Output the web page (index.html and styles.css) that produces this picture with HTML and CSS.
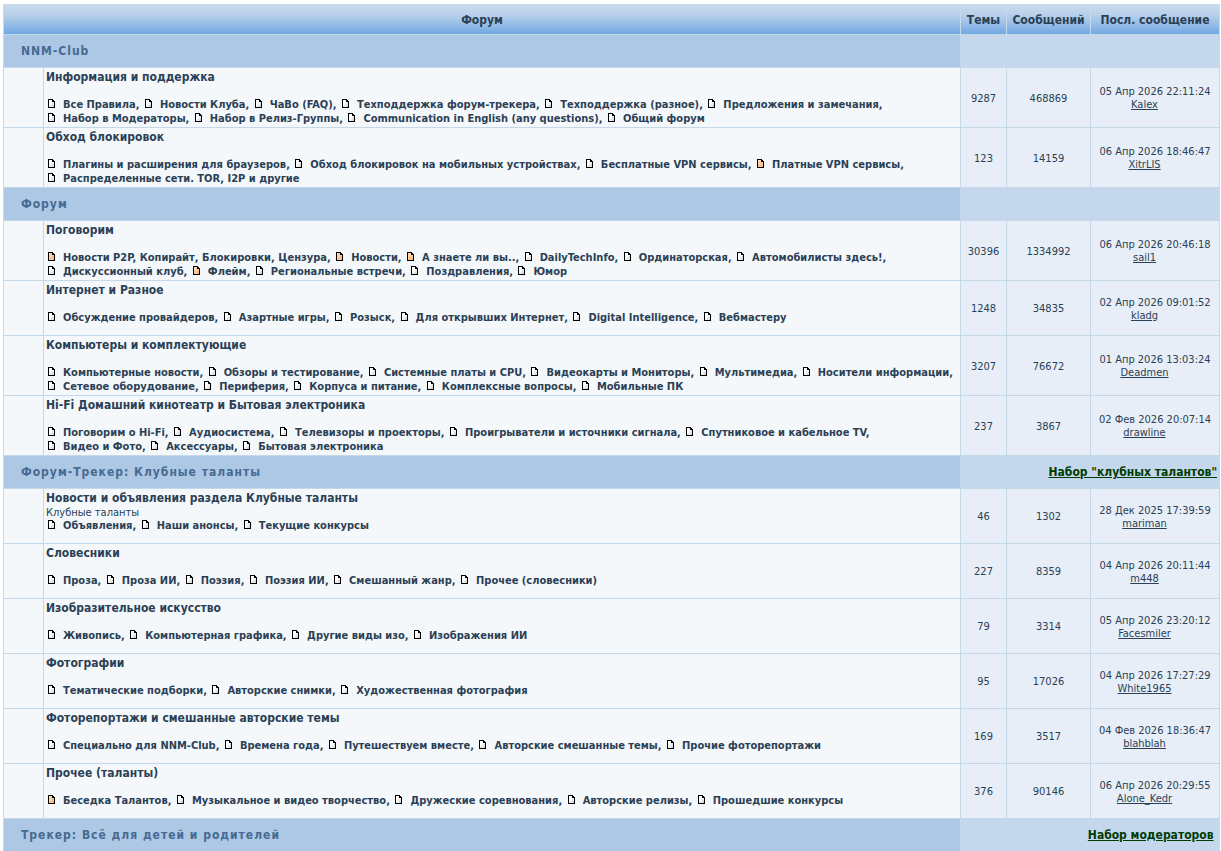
FILE: index.html
```html
<!DOCTYPE html>
<html lang="ru">

<head>
    <meta charset="utf-8">
    <title>NNM-Club</title>
    <link rel="stylesheet" href="styles.css">
</head>

<body>

    <!-- иконки подфорумов -->
    <svg class="sprite" aria-hidden="true">
        <defs>
            <linearGradient id="paper" x1="0" y1="0" x2="1" y2="1">
                <stop offset="0.4" stop-color="#fff" />
                <stop offset="1" stop-color="#ccc" />
            </linearGradient>
            <linearGradient id="paperNew" x1="0" y1="0" x2="1" y2="1">
                <stop offset="0.2" stop-color="#ffd9b0" />
                <stop offset="1" stop-color="#f5b27a" />
            </linearGradient>
            <symbol id="doc" viewBox="0 0 12 9">
                <path d="M3 1H6V3H8V8H3Z" fill="url(#paper)" />
                <path d="M2 0H7V1H8V2H9V9H2ZM3 1V8H8V3H6V1Z" fill="#000" fill-rule="evenodd" />
            </symbol>
            <symbol id="doc-new" viewBox="0 0 12 9">
                <path d="M3 1H6V3H8V8H3Z" fill="url(#paperNew)" />
                <path d="M2 0H7V1H8V2H9V9H2ZM3 1V8H8V3H6V1Z" fill="#000" fill-rule="evenodd" />
            </symbol>
        </defs>
    </svg>

    <table class="forumline">
        <colgroup>
            <col class="col-icon">
            <col>
            <col class="col-topics">
            <col class="col-posts">
            <col class="col-last">
        </colgroup>
        <thead>
            <tr>
                <th colspan="2">Форум</th>
                <th>Темы</th>
                <th>Сообщений</th>
                <th>Посл. сообщение</th>
            </tr>
        </thead>
        <tbody>
            <tr class="cat">
                <td colspan="2" class="cat-left"><a href="#">NNM-Club</a></td>
                <td colspan="3" class="cat-right"></td>
            </tr>
            <tr>
                <td class="row1"></td>
                <td class="row1 forum">
                    <a class="forumlink" href="#">Информация и поддержка</a>
                    <p class="desc"></p>
                    <div class="subs">
                        <span><svg class="ico"><use href="#doc" /></svg><a href="#">Все Правила</a>,</span>
                        <span><svg class="ico"><use href="#doc" /></svg><a href="#">Новости Клуба</a>,</span>
                        <span><svg class="ico"><use href="#doc" /></svg><a href="#">ЧаВо (FAQ)</a>,</span>
                        <span><svg class="ico"><use href="#doc" /></svg><a href="#">Техподдержка форум-трекера</a>,</span>
                        <span><svg class="ico"><use href="#doc" /></svg><a href="#">Техподдержка (разное)</a>,</span>
                        <span><svg class="ico"><use href="#doc" /></svg><a href="#">Предложения и замечания</a>,</span>
                        <span><svg class="ico"><use href="#doc" /></svg><a href="#">Набор в Модераторы</a>,</span>
                        <span><svg class="ico"><use href="#doc" /></svg><a href="#">Набор в Релиз-Группы</a>,</span>
                        <span><svg class="ico"><use href="#doc" /></svg><a href="#">Communication in English (any questions)</a>,</span>
                        <span><svg class="ico"><use href="#doc" /></svg><a href="#">Общий форум</a></span>
                    </div>
                </td>
                <td class="row2">9287</td>
                <td class="row2">468869</td>
                <td class="row2">05 Апр 2026 22:11:24<div class="author"><a href="#">Kalex</a></div></td>
            </tr>
            <tr>
                <td class="row1"></td>
                <td class="row1 forum">
                    <a class="forumlink" href="#">Обход блокировок</a>
                    <p class="desc"></p>
                    <div class="subs">
                        <span><svg class="ico"><use href="#doc" /></svg><a href="#">Плагины и расширения для браузеров</a>,</span>
                        <span><svg class="ico"><use href="#doc" /></svg><a href="#">Обход блокировок на мобильных устройствах</a>,</span>
                        <span><svg class="ico"><use href="#doc" /></svg><a href="#">Бесплатные VPN сервисы</a>,</span>
                        <span><svg class="ico"><use href="#doc-new" /></svg><a href="#">Платные VPN сервисы</a>,</span>
                        <span><svg class="ico"><use href="#doc" /></svg><a href="#">Распределенные сети. TOR, I2P и другие</a></span>
                    </div>
                </td>
                <td class="row2">123</td>
                <td class="row2">14159</td>
                <td class="row2">06 Апр 2026 18:46:47<div class="author"><a href="#">XitrLIS</a></div></td>
            </tr>

            <tr class="cat">
                <td colspan="2" class="cat-left"><a href="#">Форум</a></td>
                <td colspan="3" class="cat-right"></td>
            </tr>
            <tr>
                <td class="row1"></td>
                <td class="row1 forum">
                    <a class="forumlink" href="#">Поговорим</a>
                    <p class="desc"></p>
                    <div class="subs">
                        <span><svg class="ico"><use href="#doc-new" /></svg><a href="#">Новости P2P, Копирайт, Блокировки, Цензура</a>,</span>
                        <span><svg class="ico"><use href="#doc-new" /></svg><a href="#">Новости</a>,</span>
                        <span><svg class="ico"><use href="#doc-new" /></svg><a href="#">А знаете ли вы..</a>,</span>
                        <span><svg class="ico"><use href="#doc" /></svg><a href="#">DailyTechInfo</a>,</span>
                        <span><svg class="ico"><use href="#doc" /></svg><a href="#">Ординаторская</a>,</span>
                        <span><svg class="ico"><use href="#doc" /></svg><a href="#">Автомобилисты здесь!</a>,</span>
                        <span><svg class="ico"><use href="#doc" /></svg><a href="#">Дискуссионный клуб</a>,</span>
                        <span><svg class="ico"><use href="#doc-new" /></svg><a href="#">Флейм</a>,</span>
                        <span><svg class="ico"><use href="#doc" /></svg><a href="#">Региональные встречи</a>,</span>
                        <span><svg class="ico"><use href="#doc" /></svg><a href="#">Поздравления</a>,</span>
                        <span><svg class="ico"><use href="#doc" /></svg><a href="#">Юмор</a></span>
                    </div>
                </td>
                <td class="row2">30396</td>
                <td class="row2">1334992</td>
                <td class="row2">06 Апр 2026 20:46:18<div class="author"><a href="#">sail1</a></div></td>
            </tr>
            <tr>
                <td class="row1"></td>
                <td class="row1 forum">
                    <a class="forumlink" href="#">Интернет и Разное</a>
                    <p class="desc"></p>
                    <div class="subs">
                        <span><svg class="ico"><use href="#doc" /></svg><a href="#">Обсуждение провайдеров</a>,</span>
                        <span><svg class="ico"><use href="#doc" /></svg><a href="#">Азартные игры</a>,</span>
                        <span><svg class="ico"><use href="#doc" /></svg><a href="#">Розыск</a>,</span>
                        <span><svg class="ico"><use href="#doc" /></svg><a href="#">Для открывших Интернет</a>,</span>
                        <span><svg class="ico"><use href="#doc" /></svg><a href="#">Digital Intelligence</a>,</span>
                        <span><svg class="ico"><use href="#doc" /></svg><a href="#">Вебмастеру</a></span>
                    </div>
                </td>
                <td class="row2">1248</td>
                <td class="row2">34835</td>
                <td class="row2">02 Апр 2026 09:01:52<div class="author"><a href="#">kladg</a></div></td>
            </tr>
            <tr>
                <td class="row1"></td>
                <td class="row1 forum">
                    <a class="forumlink" href="#">Компьютеры и комплектующие</a>
                    <p class="desc"></p>
                    <div class="subs">
                        <span><svg class="ico"><use href="#doc" /></svg><a href="#">Компьютерные новости</a>,</span>
                        <span><svg class="ico"><use href="#doc" /></svg><a href="#">Обзоры и тестирование</a>,</span>
                        <span><svg class="ico"><use href="#doc" /></svg><a href="#">Системные платы и CPU</a>,</span>
                        <span><svg class="ico"><use href="#doc" /></svg><a href="#">Видеокарты и Мониторы</a>,</span>
                        <span><svg class="ico"><use href="#doc" /></svg><a href="#">Мультимедиа</a>,</span>
                        <span><svg class="ico"><use href="#doc" /></svg><a href="#">Носители информации</a>,</span>
                        <span><svg class="ico"><use href="#doc" /></svg><a href="#">Сетевое оборудование</a>,</span>
                        <span><svg class="ico"><use href="#doc" /></svg><a href="#">Периферия</a>,</span>
                        <span><svg class="ico"><use href="#doc" /></svg><a href="#">Корпуса и питание</a>,</span>
                        <span><svg class="ico"><use href="#doc" /></svg><a href="#">Комплексные вопросы</a>,</span>
                        <span><svg class="ico"><use href="#doc" /></svg><a href="#">Мобильные ПК</a></span>
                    </div>
                </td>
                <td class="row2">3207</td>
                <td class="row2">76672</td>
                <td class="row2">01 Апр 2026 13:03:24<div class="author"><a href="#">Deadmen</a></div></td>
            </tr>
            <tr>
                <td class="row1"></td>
                <td class="row1 forum">
                    <a class="forumlink" href="#">Hi-Fi Домашний кинотеатр и Бытовая электроника</a>
                    <p class="desc"></p>
                    <div class="subs">
                        <span><svg class="ico"><use href="#doc" /></svg><a href="#">Поговорим о Hi-Fi</a>,</span>
                        <span><svg class="ico"><use href="#doc" /></svg><a href="#">Аудиосистема</a>,</span>
                        <span><svg class="ico"><use href="#doc" /></svg><a href="#">Телевизоры и проекторы</a>,</span>
                        <span><svg class="ico"><use href="#doc" /></svg><a href="#">Проигрыватели и источники сигнала</a>,</span>
                        <span><svg class="ico"><use href="#doc" /></svg><a href="#">Спутниковое и кабельное TV</a>,</span>
                        <span><svg class="ico"><use href="#doc" /></svg><a href="#">Видео и Фото</a>,</span>
                        <span><svg class="ico"><use href="#doc" /></svg><a href="#">Аксессуары</a>,</span>
                        <span><svg class="ico"><use href="#doc" /></svg><a href="#">Бытовая электроника</a></span>
                    </div>
                </td>
                <td class="row2">237</td>
                <td class="row2">3867</td>
                <td class="row2">02 Фев 2026 20:07:14<div class="author"><a href="#">drawline</a></div></td>
            </tr>

            <tr class="cat">
                <td colspan="2" class="cat-left"><a href="#">Форум-Трекер: Клубные таланты</a></td>
                <td colspan="3" class="cat-right"><a href="#">Набор "клубных талантов"</a></td>
            </tr>
            <tr>
                <td class="row1"></td>
                <td class="row1 forum">
                    <a class="forumlink" href="#">Новости и объявления раздела Клубные таланты</a>
                    <p class="desc">Клубные таланты</p>
                    <div class="subs">
                        <span><svg class="ico"><use href="#doc" /></svg><a href="#">Объявления</a>,</span>
                        <span><svg class="ico"><use href="#doc" /></svg><a href="#">Наши анонсы</a>,</span>
                        <span><svg class="ico"><use href="#doc" /></svg><a href="#">Текущие конкурсы</a></span>
                    </div>
                </td>
                <td class="row2">46</td>
                <td class="row2">1302</td>
                <td class="row2">28 Дек 2025 17:39:59<div class="author"><a href="#">mariman</a></div></td>
            </tr>
            <tr>
                <td class="row1"></td>
                <td class="row1 forum">
                    <a class="forumlink" href="#">Словесники</a>
                    <p class="desc"></p>
                    <div class="subs">
                        <span><svg class="ico"><use href="#doc" /></svg><a href="#">Проза</a>,</span>
                        <span><svg class="ico"><use href="#doc" /></svg><a href="#">Проза ИИ</a>,</span>
                        <span><svg class="ico"><use href="#doc" /></svg><a href="#">Поэзия</a>,</span>
                        <span><svg class="ico"><use href="#doc" /></svg><a href="#">Поэзия ИИ</a>,</span>
                        <span><svg class="ico"><use href="#doc" /></svg><a href="#">Смешанный жанр</a>,</span>
                        <span><svg class="ico"><use href="#doc" /></svg><a href="#">Прочее (словесники)</a></span>
                    </div>
                </td>
                <td class="row2">227</td>
                <td class="row2">8359</td>
                <td class="row2">04 Апр 2026 20:11:44<div class="author"><a href="#">m448</a></div></td>
            </tr>
            <tr>
                <td class="row1"></td>
                <td class="row1 forum">
                    <a class="forumlink" href="#">Изобразительное искусство</a>
                    <p class="desc"></p>
                    <div class="subs">
                        <span><svg class="ico"><use href="#doc" /></svg><a href="#">Живопись</a>,</span>
                        <span><svg class="ico"><use href="#doc" /></svg><a href="#">Компьютерная графика</a>,</span>
                        <span><svg class="ico"><use href="#doc" /></svg><a href="#">Другие виды изо</a>,</span>
                        <span><svg class="ico"><use href="#doc" /></svg><a href="#">Изображения ИИ</a></span>
                    </div>
                </td>
                <td class="row2">79</td>
                <td class="row2">3314</td>
                <td class="row2">05 Апр 2026 23:20:12<div class="author"><a href="#">Facesmiler</a></div></td>
            </tr>
            <tr>
                <td class="row1"></td>
                <td class="row1 forum">
                    <a class="forumlink" href="#">Фотографии</a>
                    <p class="desc"></p>
                    <div class="subs">
                        <span><svg class="ico"><use href="#doc" /></svg><a href="#">Тематические подборки</a>,</span>
                        <span><svg class="ico"><use href="#doc" /></svg><a href="#">Авторские снимки</a>,</span>
                        <span><svg class="ico"><use href="#doc" /></svg><a href="#">Художественная фотография</a></span>
                    </div>
                </td>
                <td class="row2">95</td>
                <td class="row2">17026</td>
                <td class="row2">04 Апр 2026 17:27:29<div class="author"><a href="#">White1965</a></div></td>
            </tr>
            <tr>
                <td class="row1"></td>
                <td class="row1 forum">
                    <a class="forumlink" href="#">Фоторепортажи и смешанные авторские темы</a>
                    <p class="desc"></p>
                    <div class="subs">
                        <span><svg class="ico"><use href="#doc" /></svg><a href="#">Специально для NNM-Club</a>,</span>
                        <span><svg class="ico"><use href="#doc" /></svg><a href="#">Времена года</a>,</span>
                        <span><svg class="ico"><use href="#doc" /></svg><a href="#">Путешествуем вместе</a>,</span>
                        <span><svg class="ico"><use href="#doc" /></svg><a href="#">Авторские смешанные темы</a>,</span>
                        <span><svg class="ico"><use href="#doc" /></svg><a href="#">Прочие фоторепортажи</a></span>
                    </div>
                </td>
                <td class="row2">169</td>
                <td class="row2">3517</td>
                <td class="row2">04 Фев 2026 18:36:47<div class="author"><a href="#">blahblah</a></div></td>
            </tr>
            <tr>
                <td class="row1"></td>
                <td class="row1 forum">
                    <a class="forumlink" href="#">Прочее (таланты)</a>
                    <p class="desc"></p>
                    <div class="subs">
                        <span><svg class="ico"><use href="#doc-new" /></svg><a href="#">Беседка Талантов</a>,</span>
                        <span><svg class="ico"><use href="#doc" /></svg><a href="#">Музыкальное и видео творчество</a>,</span>
                        <span><svg class="ico"><use href="#doc" /></svg><a href="#">Дружеские соревнования</a>,</span>
                        <span><svg class="ico"><use href="#doc" /></svg><a href="#">Авторские релизы</a>,</span>
                        <span><svg class="ico"><use href="#doc" /></svg><a href="#">Прошедшие конкурсы</a></span>
                    </div>
                </td>
                <td class="row2">376</td>
                <td class="row2">90146</td>
                <td class="row2">06 Апр 2026 20:29:55<div class="author"><a href="#">Alone_Kedr</a></div></td>
            </tr>

            <tr class="cat">
                <td colspan="2" class="cat-left"><a href="#">Трекер: Всё для детей и родителей</a></td>
                <td colspan="3" class="cat-right"><a href="#">Набор модераторов</a>&nbsp;</td>
            </tr>
        </tbody>
    </table>

</body>

</html>
```
FILE: styles.css
```css
body {
    margin: 0;
    padding: 4px 1px 0 3px;
    background: #fff;
    color: #2b3f55;
    font-family: "DejaVu Sans Condensed", "DejaVu Sans", sans-serif;
    font-size: 11px;
    line-height: 13px;
}

a {
    color: #2b3f55;
}

.sprite {
    display: block;
    width: 0;
    height: 0;
}

.forumline {
    width: 100%;
    table-layout: fixed;
    border-collapse: collapse;
}

.col-icon {
    width: 40px;
}

.col-topics {
    width: 46px;
}

.col-posts {
    width: 84px;
}

.col-last {
    width: 129px;
}

.forumline th {
    height: 28px;
    padding: 2px 0 0;
    border-left: 1px solid #c5d8ec;
    border-right: 1px solid #c5d8ec;
    background: linear-gradient(#c8daec, #bdd3ea 30%, #8fb9e6 75%, #6fa8e3);
    font-size: 12px;
    white-space: nowrap;
}

.forumline td {
    box-sizing: border-box;
    padding: 0;
    border: 1px solid #c5d8ea;
}

.forumline .cat td {
    height: 33px;
    padding-top: 1px;
    font-size: 12px;
}

.cat .cat-left {
    padding-left: 17px;
    background: #adc8e4;
    border-right-color: #c5d7ed;
}

.cat-left a {
    color: #466a92;
    font-weight: bold;
    letter-spacing: 1px;
    text-decoration: none;
}

.cat .cat-right {
    padding-right: 2px;
    background: #c5d7ed;
    text-align: right;
}

.cat-right a {
    color: #003c00;
    font-weight: bold;
}

.row1 {
    background: #f4f8fb;
}

.forumline .row2 {
    padding-top: 1px;
    background: #e7eef7;
    text-align: center;
}

.forumline .forum {
    height: 55px;
    padding: 1px 2px;
    vertical-align: top;
}

.forumlink {
    display: block;
    font-size: 12px;
    line-height: 16px;
    font-weight: bold;
    text-decoration: none;
}

.desc {
    height: 13px;
    margin: 0;
    line-height: 13px;
}

.subs {
    font-weight: bold;
    line-height: 14px;
}

.subs span {
    white-space: nowrap;
}

.subs a {
    text-decoration: none;
}

.ico {
    width: 12px;
    height: 9px;
    margin-right: 5px;
}

.author {
    padding-right: 21px;
}
```
